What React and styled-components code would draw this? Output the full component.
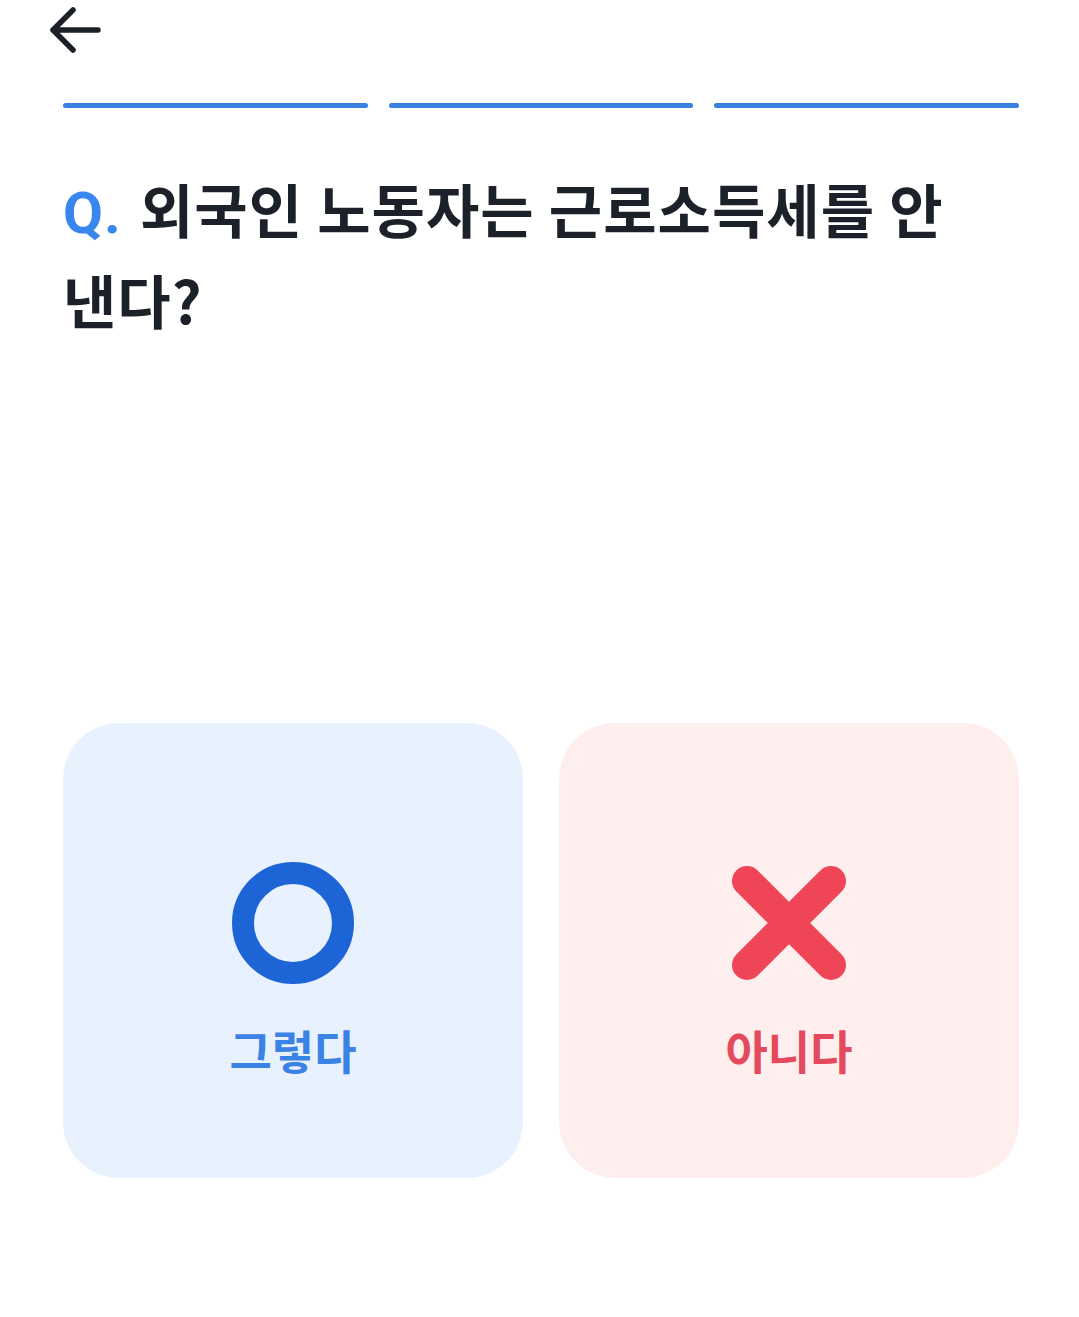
import React from "react";
import styled, { createGlobalStyle } from "styled-components";

const GlobalStyle = createGlobalStyle`
  body {
    margin: 0;
    background: #ffffff;
    font-family: "Noto Sans CJK KR", "Noto Sans", sans-serif;
  }
`;

const Page = styled.div`
  min-height: 100vh;
  padding: 0 60px 0 63px;
  box-sizing: border-box;
`;

const TopBar = styled.div`
  height: 60px;
  display: flex;
  align-items: center;
`;

const BackButton = styled.button`
  margin-left: -19px;
  width: 60px;
  height: 60px;
  padding: 0;
  border: none;
  background: none;
  cursor: pointer;
  display: flex;
`;

const Progress = styled.div`
  margin-top: 43px;
  display: grid;
  grid-template-columns: repeat(${(p) => p.steps}, 1fr);
  gap: 21px;
`;

const Step = styled.div`
  height: 5px;
  border-radius: 3px;
  background: ${(p) => (p.done ? "#3a80e2" : "#e5e8ec")};
`;

const Question = styled.h1`
  margin: 57px 0 0;
  font-size: 58px;
  line-height: 86px;
  font-weight: 700;
  color: #1b2029;
  letter-spacing: 1px;
  word-break: keep-all;
`;

const Mark = styled.span`
  font-family: "Roboto", "Noto Sans", sans-serif;
  color: #3a86ef;
  margin-right: 4px;
`;

const Answers = styled.div`
  margin-top: 381px;
  display: grid;
  grid-template-columns: 1fr 1fr;
  gap: 36px;
`;

const Card = styled.button`
  height: 455px;
  border: none;
  border-radius: 56px;
  background: ${(p) => (p.tone === "yes" ? "#e8f2fe" : "#feeeee")};
  display: flex;
  flex-direction: column;
  align-items: center;
  padding: 139px 0 0;
  gap: 35px;
  cursor: pointer;
  font-family: inherit;
`;

const Label = styled.span`
  font-size: 46px;
  line-height: 60px;
  font-weight: 700;
  color: ${(p) => (p.tone === "yes" ? "#3a82e4" : "#e5495d")};
`;

const BackIcon = () => (
  <svg width="60" height="60" viewBox="0 0 60 60" fill="none">
    <path
      d="M29 10 L9 30 L29 50 M9 30 H54"
      stroke="#1b2029"
      strokeWidth="5.5"
      strokeLinecap="round"
      strokeLinejoin="round"
    />
  </svg>
);

const CircleIcon = () => (
  <svg width="122" height="122" viewBox="0 0 122 122" fill="none">
    <circle cx="61" cy="61" r="50" stroke="#1d64d7" strokeWidth="22" />
  </svg>
);

const CrossIcon = () => (
  <svg width="122" height="122" viewBox="0 0 122 122" fill="none">
    <path
      d="M19 19 L103 103 M103 19 L19 103"
      stroke="#ef4557"
      strokeWidth="30"
      strokeLinecap="round"
    />
  </svg>
);

export default function App() {
  return (
    <>
      <GlobalStyle />
      <Page>
        <TopBar>
          <BackButton aria-label="뒤로">
            <BackIcon />
          </BackButton>
        </TopBar>

        <Progress steps={3}>
          <Step done />
          <Step done />
          <Step done />
        </Progress>

        <Question>
          <Mark>Q.</Mark> 외국인 노동자는 근로소득세를 안 낸다?
        </Question>

        <Answers>
          <Card tone="yes">
            <CircleIcon />
            <Label tone="yes">그렇다</Label>
          </Card>
          <Card tone="no">
            <CrossIcon />
            <Label tone="no">아니다</Label>
          </Card>
        </Answers>
      </Page>
    </>
  );
}
